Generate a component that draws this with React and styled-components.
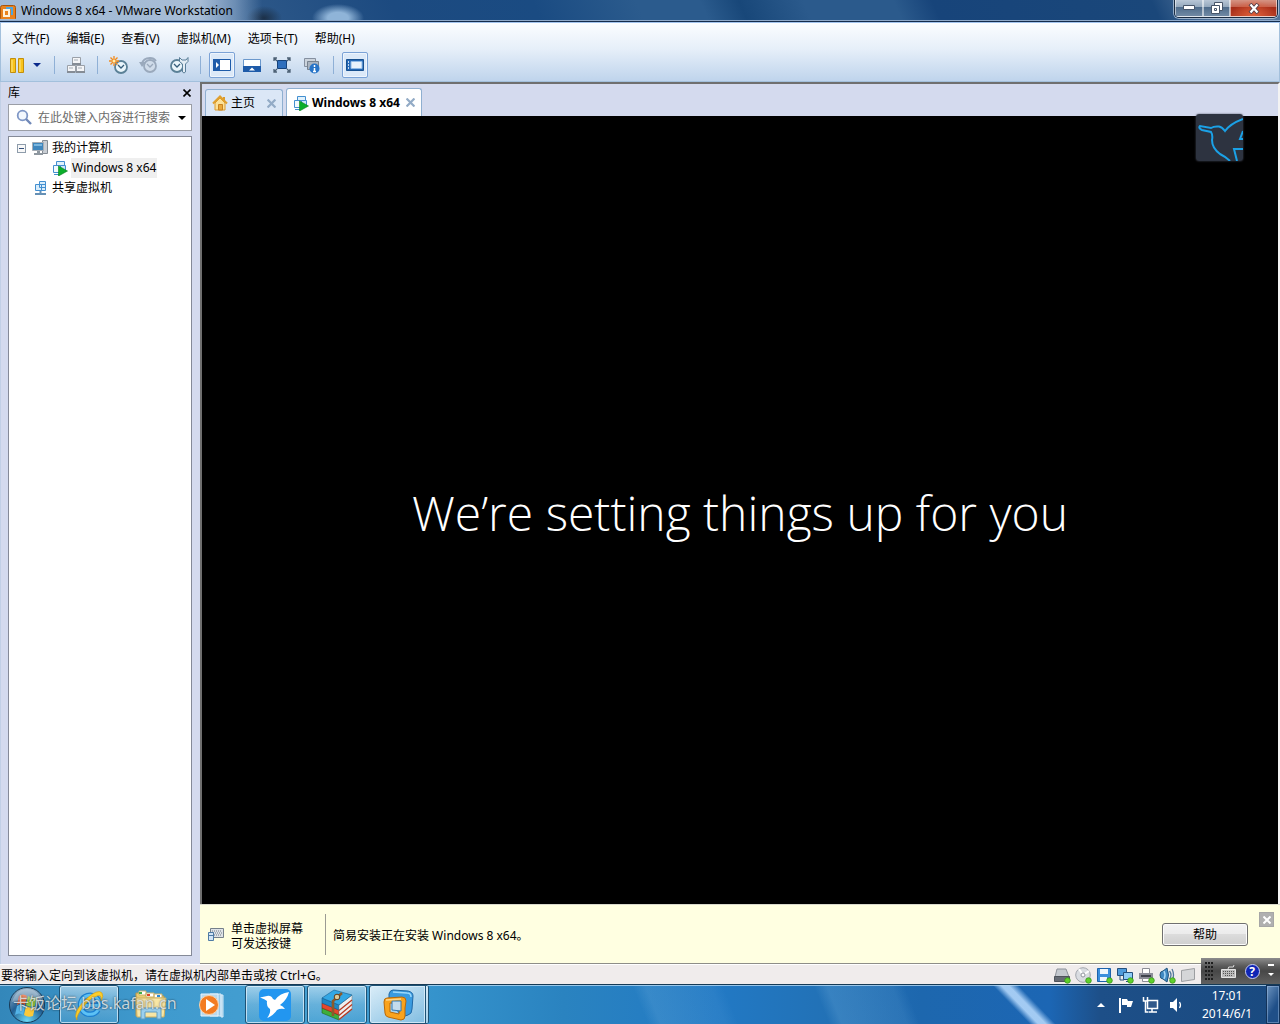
import React from "react";
import styled, { createGlobalStyle, css } from "styled-components";

const ui = '"Noto Sans", "Noto Sans CJK SC", sans-serif';

const GlobalStyle = createGlobalStyle`
  *, *::before, *::after { box-sizing: border-box; }
  body {
    margin: 0;
    overflow: hidden;
    background: #d4daee;
    color: #000;
    font: 12px/16px ${ui};
  }
  button, input { font: inherit; color: inherit; }
  button { border: 0; padding: 0; background: none; }
  svg { display: block; flex: none; }
`;

const Desktop = styled.div`
  height: 100vh;
  display: flex;
  flex-direction: column;
`;

/* ---------- title bar ---------- */

const TitleBar = styled.header`
  flex: none;
  height: 23px;
  display: flex;
  align-items: flex-start;
  padding-right: 2px;
  border-bottom: 1px solid #a3c4ee;
  box-shadow: inset 0 -1px #142c4c, inset 0 -2px #8fa9c9;
  background:
    linear-gradient(90deg, rgba(190, 208, 230, 0.75), rgba(205, 220, 238, 0.75) 200px, rgba(170, 194, 222, 0.5) 235px, transparent 262px),
    radial-gradient(ellipse 26px 14px at 338px 18px, #8fb4d8 40%, transparent),
    radial-gradient(ellipse 18px 12px at 264px 18px, #1c3048, transparent),
    linear-gradient(66deg, #4e79a6, #2c5788 20%, #1c4a80 31%, #1a4b82 42%, #2b5b8d 50%, #2b5b8d 55%, #184779 58%, #2b5a8c 63%, #2b5a8c 70%, #17447a 73%, #1a477a 90%, #6d89ab 96%, #4c7097);
`;

const AppTitle = styled.h1`
  flex: 1;
  display: flex;
  align-items: center;
  gap: 5px;
  height: 22px;
  margin: 0;
  font-size: 12px;
  font-weight: 400;
`;

const WindowButtons = styled.div`
  display: flex;
  height: 18px;
  border: 1px solid #1b2c42;
  border-top: 0;
  border-radius: 0 0 5px 5px;
  overflow: hidden;
  box-shadow: 0 0 0 1px rgba(220, 232, 245, 0.6);
`;

const WindowButton = styled.button`
  width: ${(p) => p.$width}px;
  display: flex;
  justify-content: center;
  align-items: center;
  border: solid rgba(255, 255, 255, 0.55);
  border-width: 0 1px 1px;
  background: ${(p) =>
    p.$danger
      ? "radial-gradient(ellipse at 50% 100%, #e0603a, transparent 70%), linear-gradient(#d69484, #c4604c 45%, #a62c18 46%, #b23a22)"
      : "linear-gradient(#b9c7d6, #93a7bc 45%, #4f6c8b 46%, #7089a4)"};
`;

/* ---------- menus and tools ---------- */

const CommandArea = styled.div`
  flex: none;
  height: 59px;
  border: solid #a3c0dc;
  border-width: 0 1px 1px;
  background: linear-gradient(#fbfdff, #e6eff9 45%, #bfd4ec);
`;

const MenuBar = styled.nav`
  display: flex;
  gap: 17px;
  padding: 8px 11px 5px;
`;

const MenuButton = styled.button`
  line-height: 16px;
  white-space: nowrap;
`;

const ToolBar = styled.div`
  display: flex;
  align-items: center;
  gap: 4px;
  padding-left: 3px;
`;

const ToolButton = styled.button`
  width: ${(p) => (p.$wide ? 42 : 26)}px;
  height: 26px;
  display: flex;
  align-items: center;
  justify-content: center;
  gap: 8px;
  border-radius: 2px;
  ${(p) =>
    p.$pressed &&
    css`
      border: 1px solid #7ba2d6;
      background: #dce9f8;
      box-shadow: inset 0 0 0 1px #eef5fd;
    `}
`;

const Divider = styled.span`
  width: 1px;
  height: 18px;
  margin: 0 4px;
  background: #8fb0d6;
`;

/* ---------- library ---------- */

const Body = styled.div`
  flex: 1;
  min-height: 0;
  display: flex;
`;

const Library = styled.aside`
  flex: none;
  width: 200px;
  display: flex;
  flex-direction: column;
  padding: 0 8px 8px 7px;
  border-left: 1px solid #c2d0e6;
`;

const PanelHeader = styled.div`
  height: 22px;
  display: flex;
  align-items: center;
  justify-content: space-between;
  padding-right: 1px;
`;

const PanelTitle = styled.h2`
  margin: 0;
  font-size: 12px;
  font-weight: 400;
`;

const SearchBox = styled.label`
  height: 27px;
  display: flex;
  align-items: center;
  gap: 5px;
  padding: 0 5px 0 7px;
  border: 1px solid #9b9ea6;
  background: #fff;
`;

const SearchInput = styled.input`
  flex: 1;
  min-width: 0;
  padding: 0;
  border: 0;
  outline: 0;
  background: none;
  &::placeholder { color: #6b6b6b; opacity: 1; }
`;

const Tree = styled.ul`
  flex: 1;
  margin: 5px 0 0;
  padding: 1px 0;
  list-style: none;
  border: 1px solid #858a98;
  background: #fff;
`;

const TreeRow = styled.li`
  height: 20px;
  display: flex;
  align-items: center;
  gap: 3px;
  padding-left: ${(p) => p.$indent}px;
`;

const TreeLabel = styled.span`
  padding: 2px 1px;
  background: ${(p) => (p.$selected ? "#efefef" : "none")};
`;

const Expander = styled.button`
  width: 9px;
  height: 9px;
  display: flex;
  align-items: center;
  justify-content: center;
  margin-right: 3px;
  border: 1px solid #8e9cab;
  background: #f8f8f8;
  &::after { content: ""; width: 5px; height: 1px; background: #34507c; }
`;

/* ---------- machine view ---------- */

const Workspace = styled.main`
  flex: 1;
  min-width: 0;
  display: flex;
  flex-direction: column;
`;

const Viewer = styled.section`
  flex: 1;
  position: relative;
  display: flex;
  flex-direction: column;
  border: solid #6f6f6f;
  border-width: 2px 0 0 2px;
  border-right: 2px solid #f3f3f3;
`;

const TabStrip = styled.div`
  height: 32px;
  display: flex;
  align-items: flex-end;
  gap: 3px;
  padding-left: 3px;
  background: #d4daee;
`;

const Tab = styled.div`
  min-width: ${(p) => (p.$active ? 136 : 78)}px;
  height: ${(p) => (p.$active ? 28 : 27)}px;
  display: flex;
  align-items: center;
  justify-content: space-between;
  padding: 0 6px;
  border: 1px solid #8fafd0;
  border-bottom: 0;
  border-radius: 3px 3px 0 0;
  background: ${(p) => (p.$active ? "#fff" : "#dbe7f6")};
  font-weight: ${(p) => (p.$active ? 700 : 400)};
`;

const TabName = styled.button`
  display: flex;
  align-items: center;
  gap: 3px;
  font-weight: inherit;
  white-space: nowrap;
`;

const Screen = styled.div`
  flex: 1;
  display: flex;
  align-items: center;
  justify-content: center;
  background: #000;
  color: #fff;
`;

const SetupMessage = styled.p`
  margin: 0;
  padding-top: 6px;
  font: 300 48px/64px "Open Sans", "Noto Sans", sans-serif;
  white-space: nowrap;
`;

const BirdBadge = styled.div`
  position: absolute;
  top: 30px;
  right: 35px;
  border-radius: 3px;
  overflow: hidden;
  box-shadow: 0 0 2px #4b5160;
`;

const HintBar = styled.section`
  flex: none;
  height: 60px;
  display: flex;
  align-items: center;
  gap: 7px;
  padding: 0 6px 0 8px;
  border: solid #8e8e88;
  border-width: 1px 0;
  border-top-color: #d9d9cc;
  background: #ffffe1;
`;

const HintTip = styled.p`
  width: 87px;
  margin: 0;
  padding-top: 3px;
  line-height: 15px;
  white-space: nowrap;
`;

const HintRule = styled.span`
  width: 1px;
  height: 41px;
  background: #9b9b93;
`;

const HintText = styled.p`
  flex: 1;
  margin: 0;
  padding-top: 3px;
`;

const HelpButton = styled.button`
  width: 86px;
  height: 23px;
  margin-right: 4px;
  padding-top: 2px;
  border: 1px solid #707070;
  border-radius: 3px;
  background: linear-gradient(#f3f3f3, #ebebeb 49%, #dcdcdc 50%, #cfcfcf);
  box-shadow: inset 0 0 0 1px #fbfbfb;
`;

const DismissButton = styled.button`
  width: 15px;
  height: 15px;
  align-self: flex-start;
  display: flex;
  align-items: center;
  justify-content: center;
  margin-top: 7px;
  border: 1px solid #a6a6a6;
  background: #b0b0b0;
`;

/* ---------- status bar ---------- */

const StatusBar = styled.footer`
  flex: none;
  position: relative;
  height: 20px;
  display: flex;
  align-items: center;
  justify-content: space-between;
  padding: 2px 83px 0 1px;
  border-top: 1px solid #fff;
  background: #f0ecec;
`;

const Devices = styled.div`
  display: flex;
  gap: 4px;
`;

const Device = styled.button`
  width: 17px;
  height: 17px;
`;

const LanguageBar = styled.div`
  position: absolute;
  right: 0;
  bottom: 0;
  width: 79px;
  height: 26px;
  display: flex;
  align-items: center;
  justify-content: space-between;
  padding: 0 6px 0 4px;
  background: linear-gradient(#8d8d8d, #5c5c5c 30%, #474747 50%, #606060);
`;

/* ---------- taskbar ---------- */

const TaskBar = styled.div`
  flex: none;
  position: relative;
  height: 40px;
  display: flex;
  border-top: 1px solid #163a55;
  box-shadow: inset 0 1px rgba(190, 222, 245, 0.75);
  background:
    linear-gradient(46deg, transparent 83.2%, rgba(170, 208, 246, 0.95) 83.9%, rgba(170, 208, 246, 0.95) 84.5%, transparent 85.3%) 0 0 / 1200px 100% no-repeat,
    linear-gradient(68deg, transparent 50%, rgba(120, 180, 225, 0.22) 51%, rgba(120, 180, 225, 0.1) 56%, transparent 57%, transparent 64%, rgba(120, 180, 225, 0.25) 65%, rgba(120, 180, 225, 0.15) 70%, transparent 71%),
    linear-gradient(90deg, #3387ba, #3f9ace 12%, #45a0d2 25%, #3593cc 34%, #2a83c0 44%, #2279c4 56%, #2270b4 66%, #1d67ae 72%, #1c66b4 82%, #1d4f88 86%, #1a4a80);
`;

const StartButton = styled.button`
  width: 55px;
  padding-left: 8px;
`;

const Tasks = styled.div`
  flex: 1;
  display: flex;
  gap: 2px;
  padding-left: 4px;
`;

const TaskButton = styled.button`
  width: 60px;
  display: flex;
  align-items: center;
  justify-content: center;
  ${(p) =>
    p.$open &&
    css`
      border: 1px solid #1d5275;
      border-radius: 3px;
      box-shadow: inset 0 0 0 1px rgba(225, 242, 252, 0.75);
      background: linear-gradient(rgba(235, 247, 255, 0.55), rgba(200, 228, 246, 0.25) 50%, rgba(120, 190, 230, 0.15));
    `}
  ${(p) =>
    p.$current &&
    css`
      background: linear-gradient(150deg, rgba(245, 251, 255, 0.85), rgba(190, 222, 242, 0.55));
      border-right: 4px double #1d5275;
    `}
`;

const Tray = styled.div`
  display: flex;
  align-items: center;
  color: #fff;
`;

const TrayButton = styled.button`
  width: 25px;
  display: flex;
  justify-content: center;
`;

const Clock = styled.time`
  width: 78px;
  line-height: 18px;
  text-align: center;
`;

const ShowDesktop = styled.button`
  width: 14px;
  align-self: stretch;
  border: 1px solid #123259;
  box-shadow: inset 0 0 0 1px rgba(180, 208, 240, 0.4);
  background: linear-gradient(120deg, #6b92be, #1f4f88 60%);
`;

const Watermark = styled.span`
  position: absolute;
  left: 13px;
  top: 8px;
  color: rgba(240, 246, 250, 0.8);
  font-size: 16px;
  line-height: 20px;
  text-shadow: 0 0 2px rgba(0, 0, 0, 0.7);
  white-space: nowrap;
  pointer-events: none;
`;

/* ---------- drawings ---------- */

const Svg = ({ w = 16, h = w, box, children }) => (
  <svg width={w} height={h} viewBox={box || `0 0 ${w} ${h}`} fill="none" aria-hidden="true">
    {children}
  </svg>
);

const Cross = ({ size = 8, color = "#000", stroke = 2 }) => (
  <Svg w={size} box="0 0 8 8">
    <path d="M.5.5l7 7M7.5.5l-7 7" stroke={color} strokeWidth={stroke} />
  </Svg>
);

const Caret = ({ color = "#000", up }) => (
  <Svg w={8} h={4}>
    <path d={up ? "M0 4h8L4 0z" : "M0 0h8L4 4z"} fill={color} />
  </Svg>
);

const VMLogo = ({ size }) => (
  <Svg w={size} box="0 0 32 32">
    <path d="M11 1l15 1q5 1 5 5l-1 13q0 5-4 6l-6 2L7 10V5q1-4 4-4z" fill="#3a9be0" stroke="#1f68a6" />
    <path d="M11 3l14 1q4 0 4 4" stroke="#9bd8fb" strokeWidth="1.500" />
    <path fillRule="evenodd" d="M5 9l15-1q4 0 4 4l-1 7v8q0 4-4 4l-13-3q-3-1-3-4L2 13q0-4 3-4zm3 5v9l9 2 1-11z" fill="#f9a31d" stroke="#b96908" />
    <path d="M10 12h9v10l-9-1z" fill="#c4dcec" stroke="#2f79b4" />
    <path d="M4 11l15-1" stroke="#ffd68a" strokeWidth="1.300" />
  </Svg>
);

const AppIcon = () => (
  <Svg w={16}>
    <rect x=".5" y="2.500" width="15" height="15" rx="2" fill="#e9821e" stroke="#a9540a" />
    <path d="M6 4h7v8h-2V6H6z" fill="#4aa6e2" />
    <path d="M3 6h7v8H3zM5 8v4h3V8z" fill="#fff2dc" fillRule="evenodd" />
  </Svg>
);

const Machine = () => (
  <Svg w={16}>
    <path d="M4.500 1.500h8v8h-8z" fill="#e0f1fc" stroke="#438fd0" />
    <path d="M1.500 5.500h7v7h-7z" fill="#f2f9fe" stroke="#438fd0" />
    <path d="M8.500 5.500h5v6h-5z" fill="#cae6fa" stroke="#438fd0" />
    <path d="M2 14.500h5" stroke="#438fd0" />
    <path d="M6.500 6l9 5-9 5z" fill="#0cae2b" stroke="#08801c" strokeWidth=".6" />
  </Svg>
);

const HomeIcon = () => (
  <Svg w={16}>
    <path d="M3 8v7h10V8L8 3z" fill="#fbe19a" stroke="#dc9b2c" />
    <path d="M12 2v4" stroke="#dc9b2c" strokeWidth="2" />
    <path d="M1 8.500l7-7 7 7" stroke="#dfa030" strokeWidth="2" />
    <path d="M6.500 9.500h4V15h-4z" fill="#eaa838" stroke="#c98420" />
  </Svg>
);

const PauseIcon = () => (
  <Svg w={15}>
    <path d="M.5.5h5v14h-5zM8.500.5h5v14h-5z" fill="#f8c31c" stroke="#c38f0a" />
    <path d="M2 2v12M10 2v12" stroke="#fde68a" />
  </Svg>
);

const KeysIcon = () => (
  <Svg w={20} h={18}>
    <path d="M6.500 1.500h8v6h-8zM1.500 9.500h8v6h-8zM10.500 9.500h8v6h-8z" fill="#f4f5f7" stroke="#9aa0a8" />
    <path d="M6 8h9M1 16h8.500M10 16h9" stroke="#858c95" strokeWidth="2" />
    <path d="M8 4h4M3 12h4M12 12h4" stroke="#a5adb6" />
  </Svg>
);

const Dial = ({ faded, x = 10, y = 11 }) => (
  <>
    <circle cx={x} cy={y} r="6" fill={faded ? "#d0dcea" : "#e9f5fb"} stroke={faded ? "#9aa9bc" : "#5b8197"} strokeWidth="1.800" />
    <path d={`M${x - 3} ${y - 2}l3 3 3-3`} stroke={faded ? "#9aa9bc" : "#355d7a"} strokeWidth="1.300" />
  </>
);

const SnapshotIcon = () => (
  <Svg w={20} h={18}>
    <Dial x={12} y={11} />
    <path d="M5 0v10M0 5h10M1.500 1.500l7 7M8.500 1.500l-7 7" stroke="#f18a1d" strokeWidth="1.300" />
    <circle cx="5" cy="5" r="1.500" fill="#fff0b0" />
  </Svg>
);

const RevertIcon = () => (
  <Svg w={20} h={18}>
    <Dial faded x={11} y={10} />
    <path d="M3 8q1-6 8-6 4 0 6 3" stroke="#9aa9bc" strokeWidth="1.800" />
    <path d="M0 6h7l-4 5z" fill="#9aa9bc" />
  </Svg>
);

const ManageIcon = () => (
  <Svg w={20} h={18}>
    <Dial x={8} y={10} />
    <path d="M10.500 1.500v4l3 2.500v8q1.500 2 3 0V8l2.500-2.500v-4l-2 2.500h-4z" fill="#e3edf4" stroke="#5b7f99" />
  </Svg>
);

const LibraryPaneIcon = () => (
  <Svg w={18} h={12}>
    <path d="M.5.5h17v11H.5z" fill="#fff" stroke="#1e5ba9" />
    <path d="M0 0h7v12H0z" fill="#1e5ba9" />
    <path d="M3 3l3 3-3 3z" fill="#fff" />
  </Svg>
);

const ThumbPaneIcon = () => (
  <Svg w={18} h={13}>
    <path d="M.5.500h17v11H.5z" fill="#fff" stroke="#6b98cc" />
    <path d="M0 7h18v6H0z" fill="#1e5ba9" />
    <path d="M6 11.500l3-3 3 3z" fill="#fff" />
  </Svg>
);

const FullScreenIcon = () => (
  <Svg w={18} h={16}>
    <path d="M4.500 3.500h9v8h-9z" fill="#2f6fbd" stroke="#16437c" />
    <path d="M1 4V1h3M14 1h3v3M17 12v3h-3M4 15H1v-3M1 1l3 3M17 1l-3 3M17 15l-3-3M1 15l3-3" stroke="#4c6074" strokeWidth="1.300" />
  </Svg>
);

const UnityIcon = () => (
  <Svg w={18} h={17}>
    <path d="M1.500 1.500h11v8h-11z" fill="#cbd3dc" stroke="#8590a0" />
    <path d="M4.500 4.500h11v8h-11z" fill="#aab4c0" stroke="#77828f" />
    <circle cx="11.500" cy="11.500" r="5" fill="#2874c7" />
    <path d="M11.500 8v2M11.500 11v4M10 14.500h3" stroke="#fff" strokeWidth="1.500" />
  </Svg>
);

const ConsoleIcon = () => (
  <Svg w={18} h={12}>
    <path d="M.5.500h17v11H.5z" fill="#2367b5" stroke="#18508f" />
    <path d="M5 2.500h11v7H5z" fill="#e8f2fc" stroke="#8fb9e6" />
    <path d="M2 3h1M2 6h1M2 9h1" stroke="#fff" strokeWidth="1.500" />
  </Svg>
);

const SearchIcon = () => (
  <Svg w={17}>
    <circle cx="6.500" cy="6.500" r="4.800" fill="#f3f8fe" stroke="#7f97c6" strokeWidth="1.800" />
    <path d="M10 10l5 5" stroke="#7088b8" strokeWidth="2.400" />
  </Svg>
);

const ComputerIcon = () => (
  <Svg w={16}>
    <path d="M10.500.500h5v13h-5z" fill="#c9ced4" stroke="#858c94" />
    <path d="M.5 2.500h11v8H.5z" fill="#3f86bd" stroke="#a6adb5" />
    <path d="M2 4h8v2H2z" fill="#7bb6de" />
    <path d="M5 11h3v2H5zM2 13h9v2H2z" fill="#8e979f" />
  </Svg>
);

const SharedIcon = () => (
  <Svg w={14}>
    <path d="M5.500.500h6v6h-6zM1.500 3.500h6v6h-6zM7.500 3.500h4v6h-4z" fill="#d9edfb" stroke="#438fd0" />
    <path d="M6.500 10v3M1 13h11" stroke="#6590b5" strokeWidth="2" />
  </Svg>
);

const KeyboardHint = () => (
  <Svg w={16} h={13}>
    <path d="M2.500.500h13v9h-13z" fill="#dfe3e7" stroke="#75808a" />
    <path d="M4 3h10M5 5h9M4 7h10" stroke="#707a84" strokeDasharray="1 1" />
    <path d="M.5 4.500h5v8h-5z" fill="#d3e6f6" stroke="#4f7ba5" />
    <path d="M1 7.500h4" stroke="#4f7ba5" />
  </Svg>
);

const BirdOutline = () => (
  <svg width="47" height="47" viewBox="0 0 47 47" fill="none" aria-hidden="true">
    <path d="M0 0h47v47H0z" fill="#2d3340" />
    <path d="M47 5Q34 10 29 17q-3-4-6-4.500-5-.5-8 1.500L4 12q-2 2 2 4l9 2q2 3 1 8 0 8 8 14 6 3 10 7" stroke="#1ba1e6" strokeWidth="2" />
    <path d="M47 17l-3 8h3M41 47l-3-12h9" stroke="#1ba1e6" strokeWidth="2" />
  </svg>
);

const deviceShapes = {
  硬盘: <><path d="M3 2h9l3 8H1z" fill="#c5c9cf" stroke="#8d929a" /><path d="M.5 9.500h15v5H.5z" fill="#666b74" stroke="#4e535b" /></>,
  光驱: <><circle cx="8" cy="8" r="7.300" fill="#d9dce1" stroke="#a2a6ad" /><path d="M8 8L4 2M8 8l6-4" stroke="#fff" strokeWidth="2" /><circle cx="8" cy="8" r="2" fill="#fff" stroke="#8f949c" /></>,
  软盘: <><path d="M1.500 1.500h13v13h-13z" fill="#3b8fdd" stroke="#1d62ab" /><path d="M4 2h8v5H4zM4 10h7v4H4z" fill="#eef6fd" /></>,
  网络: <><path d="M.5 1.500h9v7h-9z" fill="#4f9bdc" stroke="#24507e" /><path d="M6.500 5.500h9v7h-9z" fill="#8fcbf6" stroke="#24507e" /><path d="M3 9v4h4M9 14.500h5" stroke="#24507e" /></>,
  打印机: <><path d="M4.500 1.500h7v5h-7z" fill="#fff" stroke="#8d8d96" /><path d="M1 6h14v6H1z" fill="#8c8d98" /><path d="M3 8h10v2H3z" fill="#40424d" /><path d="M4.500 11.500h7v3h-7z" fill="#fff" stroke="#8d8d96" /></>,
  声卡: <><path d="M1 8q0-4 3-4l4-3q3 7 0 14l-4-3Q1 12 1 8z" fill="#3f88c2" stroke="#24567e" /><path d="M5 4q2 4 0 8" stroke="#a9d6f4" strokeWidth="1.500" /><path d="M10.500 4q3 4 0 8M13 2q3 6 0 12" stroke="#50779a" strokeWidth="1.300" /></>,
  消息: <path d="M1.500 3.500l13-2v11l-13 2z" fill="#d5d6d8" stroke="#9c9ea1" />,
};

const DeviceIcon = ({ name }) => (
  <Svg w={17} box="0 0 17 17">
    {deviceShapes[name]}
    {name !== "消息" && <circle cx="13.500" cy="13.500" r="2.800" fill="#5fd02c" stroke="#2d8b14" strokeWidth=".7" />}
  </Svg>
);

const StartOrb = () => (
  <Svg w={38} box="0 0 38 38">
    <defs>
      <radialGradient id="orb" cx=".5" cy=".95" r=".9">
        <stop offset="0" stopColor="#6ad8f6" />
        <stop offset=".55" stopColor="#215f94" />
        <stop offset="1" stopColor="#8aa9c2" />
      </radialGradient>
    </defs>
    <circle cx="19" cy="19" r="17.500" fill="url(#orb)" stroke="#173a57" />
    <path d="M11 10q4-3 8 0l-2 9q-4-3-8 0z" fill="#ee6532" />
    <path d="M20 10q4 3 9 1l-2 9q-5 2-9-1z" fill="#8cc63e" />
    <path d="M9 20q4-3 8 0l-2 9q-4-3-8 0z" fill="#54b4e8" />
    <path d="M18 20q4 3 9 1l-2 9q-5 2-9-1z" fill="#fcc93a" />
    <path d="M4 16Q8 3 19 3t15 13q-14-5-30 0z" fill="#fff" opacity=".28" />
  </Svg>
);

const IEIcon = () => (
  <Svg w={32}>
    <path d="M25 21A9.500 9.500 0 1 1 26.500 16.500H9" stroke="#1c7fd0" strokeWidth="5.500" />
    <path d="M25 21A9.500 9.500 0 1 1 26.500 16.500H9" stroke="#5cc1f5" strokeWidth="3" />
    <path d="M4 31Q-1 24 12 11 25-1 29 4q2 3-1 8 1-7-4-5-7 2-14 11T4 31z" fill="#fbcd2c" stroke="#d39b0c" strokeWidth=".6" />
  </Svg>
);

const FolderIcon = () => (
  <Svg w={34} h={32}>
    <path d="M2 4h8l2 3h18v20H2z" fill="#e9cd75" stroke="#b9974a" />
    <path d="M5 2h7v4H5zM12 4h8v4h-8zM20 5h8v4h-8z" fill="#fff" stroke="#ccb36a" />
    <path d="M5 3h3v2H5z" fill="#3fae49" /><path d="M13 5h3v2h-3z" fill="#e0442c" /><path d="M23 6h3v2h-3z" fill="#2f8bd6" />
    <path d="M2 9h30l-2 19H3z" fill="#f8e6a5" stroke="#cdb062" />
    <path d="M7 30V19h20v11h-4v-7H11v7z" fill="#9bd0ee" stroke="#5f9dc4" />
  </Svg>
);

const MediaIcon = () => (
  <Svg w={30} h={28}>
    <path d="M12 3h11v22H12zM23 4h2v22h-2z" fill="#9cc9e6" stroke="#d7ebf8" />
    <path d="M3 3h17v22H3z" fill="#b8d9ee" stroke="#e6f3fb" />
    <circle cx="11" cy="14" r="9.500" fill="#f37c22" stroke="#fbd2a8" />
    <path d="M8 8l9 6-9 6z" fill="#fff" />
  </Svg>
);

const BirdIcon = () => (
  <Svg w={32}>
    <rect width="32" height="32" rx="5" fill="#2296f0" />
    <path d="M1 8.500l7-1.500q4-1 6 3l2 1q5-7 14-8-2 8-9 13 3 1 5 4-5-1-8 1-3 5-10 8 4-5 3-9-4-3-3-8-2-2-7-3.500z" fill="#fff" />
  </Svg>
);

const BooksIcon = () => (
  <Svg w={34} h={32}>
    <path d="M2 19l17 7v5L2 24z" fill="#3fae3a" stroke="#1c661c" strokeWidth=".6" />
    <path d="M2 14l17 7v5L2 19z" fill="#e5482c" stroke="#8e2412" strokeWidth=".6" />
    <path d="M2 9l17 7v5L2 14z" fill="#1f86c4" stroke="#145c8e" strokeWidth=".6" />
    <path d="M19 16L32 6v14L19 31z" fill="#eceff0" stroke="#7f8a90" strokeWidth=".6" />
    <path d="M19 21.500L32 11M19 26.500L32 15.500M19 30.500L32 20" stroke="#b83a22" strokeWidth="1.300" />
    <path d="M2 9L14 1l18 5-13 10z" fill="#33a7e4" stroke="#145c8e" strokeWidth=".6" />
    <path d="M22 4l-9 8v15" stroke="#8c5a2b" strokeWidth="2.600" />
    <circle cx="17" cy="8" r="2.800" fill="#dcc998" stroke="#5e3a18" />
  </Svg>
);

const FlagIcon = () => (
  <Svg w={16}>
    <path d="M2 1v15" stroke="#fff" strokeWidth="2" />
    <path d="M4 2h5l1 2h5l-2 6H9V8H4z" fill="#fff" />
  </Svg>
);

const NetworkIcon = () => (
  <Svg w={17} h={16}>
    <path d="M5.500 3.500h10v8h-10z" fill="#31598a" stroke="#fff" strokeWidth="1.500" />
    <path d="M7 15h8M10 12v3M1.500 0v4h4V0M3.500 4v11h3" stroke="#fff" strokeWidth="1.500" />
  </Svg>
);

const SpeakerIcon = () => (
  <Svg w={14} h={16}>
    <path d="M1 5h3l4-4v14l-4-4H1z" fill="#fff" />
    <path d="M10.500 5q2 3 0 6" stroke="#fff" strokeWidth="1.300" />
  </Svg>
);

const Grip = () => (
  <Svg w={8} h={18}>
    <path d="M1 0v18M4 0v18M7 0v18" stroke="#1d1d1d" strokeWidth="2" strokeDasharray="2 2" />
  </Svg>
);

const LangKeyboard = () => (
  <Svg w={15} h={13}>
    <path d="M.5 4.500h14v8H.5z" fill="#bbb" stroke="#e4e4e4" />
    <path d="M2 6.500h11M2 8.500h11M4 10.500h7" stroke="#555" strokeDasharray="1 1" />
    <path d="M7 4q0-3 3-2t3-2" stroke="#ddd" />
  </Svg>
);

const Question = styled.button`
  width: 15px;
  height: 15px;
  border: 1px solid #c9cff5;
  border-radius: 50%;
  background: #1026b5;
  color: #fff;
  font-weight: 700;
  line-height: 13px;
`;

const LangOptions = () => (
  <Svg w={6} h={14}>
    <path d="M0 1h6" stroke="#fff" strokeWidth="2" />
    <path d="M0 9h6l-3 3z" fill="#fff" />
  </Svg>
);

/* ---------- page ---------- */

const menus = ["文件(F)", "编辑(E)", "查看(V)", "虚拟机(M)", "选项卡(T)", "帮助(H)"];

const tools = [
  { label: "暂停", icon: <><PauseIcon /><Caret color="#0a2a8c" /></>, wide: true },
  null,
  { label: "发送按键", icon: <KeysIcon /> },
  null,
  { label: "拍摄快照", icon: <SnapshotIcon /> },
  { label: "恢复快照", icon: <RevertIcon /> },
  { label: "管理快照", icon: <ManageIcon /> },
  null,
  { label: "显示库", icon: <LibraryPaneIcon />, pressed: true },
  { label: "显示缩略图", icon: <ThumbPaneIcon /> },
  { label: "全屏", icon: <FullScreenIcon /> },
  { label: "Unity", icon: <UnityIcon /> },
  null,
  { label: "控制台视图", icon: <ConsoleIcon />, pressed: true },
];

export default function App() {
  return (
    <Desktop>
      <GlobalStyle />
      <TitleBar>
        <AppTitle><AppIcon />Windows 8 x64 - VMware Workstation</AppTitle>
        <WindowButtons>
          <WindowButton $width={28} aria-label="最小化">
            <Svg w={12} h={6}><path d="M.5.500h11v4H.5z" fill="#fff" stroke="#475569" /></Svg>
          </WindowButton>
          <WindowButton $width={27} aria-label="还原">
            <Svg w={12}>
              <path d="M3.500.500h8v8h-8z" fill="#fff" stroke="#475569" />
              <path d="M.5 3.500h8v8h-8z" fill="#fff" stroke="#475569" />
              <path d="M3.500 6.500h2v2h-2z" fill="#fff" stroke="#475569" />
            </Svg>
          </WindowButton>
          <WindowButton $width={47} $danger aria-label="关闭">
            <Svg w={12} h={11}>
              <path d="M2 1l8 9M10 1l-8 9" stroke="#57404a" strokeWidth="4" />
              <path d="M2.500 1.500l7 8M9.500 1.500l-7 8" stroke="#fff" strokeWidth="2.200" />
            </Svg>
          </WindowButton>
        </WindowButtons>
      </TitleBar>

      <CommandArea>
        <MenuBar>
          {menus.map((m) => <MenuButton key={m}>{m}</MenuButton>)}
        </MenuBar>
        <ToolBar>
          {tools.map((t, i) =>
            t ? (
              <ToolButton key={t.label} aria-label={t.label} $wide={t.wide} $pressed={t.pressed}>{t.icon}</ToolButton>
            ) : (
              <Divider key={i} />
            )
          )}
        </ToolBar>
      </CommandArea>

      <Body>
        <Library>
          <PanelHeader>
            <PanelTitle>库</PanelTitle>
            <button aria-label="关闭库"><Cross stroke={1.6} /></button>
          </PanelHeader>
          <SearchBox>
            <SearchIcon />
            <SearchInput aria-label="搜索" placeholder="在此处键入内容进行搜索" />
            <Caret />
          </SearchBox>
          <Tree>
            <TreeRow $indent={8}>
              <Expander aria-label="折叠" />
              <ComputerIcon />
              <TreeLabel>我的计算机</TreeLabel>
            </TreeRow>
            <TreeRow $indent={43}>
              <Machine />
              <TreeLabel $selected>Windows 8 x64</TreeLabel>
            </TreeRow>
            <TreeRow $indent={25}>
              <SharedIcon />
              <TreeLabel>共享虚拟机</TreeLabel>
            </TreeRow>
          </Tree>
        </Library>

        <Workspace>
          <Viewer>
            <TabStrip>
              <Tab>
                <TabName><HomeIcon />主页</TabName>
                <button aria-label="关闭主页"><Cross size={9} color="#93abc6" /></button>
              </Tab>
              <Tab $active>
                <TabName><Machine />Windows 8 x64</TabName>
                <button aria-label="关闭 Windows 8 x64"><Cross size={9} color="#93abc6" /></button>
              </Tab>
            </TabStrip>
            <Screen><SetupMessage>We’re setting things up for you</SetupMessage></Screen>
            <BirdBadge><BirdOutline /></BirdBadge>
          </Viewer>
          <HintBar>
            <KeyboardHint />
            <HintTip>单击虚拟屏幕<br />可发送按键</HintTip>
            <HintRule />
            <HintText>简易安装正在安装 Windows 8 x64。</HintText>
            <HelpButton>帮助</HelpButton>
            <DismissButton aria-label="关闭提示"><Cross color="#fff" /></DismissButton>
          </HintBar>
        </Workspace>
      </Body>

      <StatusBar>
        <span>要将输入定向到该虚拟机，请在虚拟机内部单击或按 Ctrl+G。</span>
        <Devices>
          {Object.keys(deviceShapes).map((d) => (
            <Device key={d} aria-label={d}><DeviceIcon name={d} /></Device>
          ))}
        </Devices>
        <LanguageBar>
          <Grip />
          <LangKeyboard />
          <Question aria-label="帮助">?</Question>
          <LangOptions />
        </LanguageBar>
      </StatusBar>

      <TaskBar>
        <StartButton aria-label="开始"><StartOrb /></StartButton>
        <Tasks>
          <TaskButton $open aria-label="Internet Explorer"><IEIcon /></TaskButton>
          <TaskButton aria-label="资源管理器"><FolderIcon /></TaskButton>
          <TaskButton aria-label="媒体播放器"><MediaIcon /></TaskButton>
          <TaskButton $open aria-label="迅雷"><BirdIcon /></TaskButton>
          <TaskButton $open aria-label="WinRAR"><BooksIcon /></TaskButton>
          <TaskButton $open $current aria-label="VMware Workstation"><VMLogo size={32} /></TaskButton>
        </Tasks>
        <Tray>
          <TrayButton aria-label="显示隐藏的图标"><Caret up color="#fff" /></TrayButton>
          <TrayButton aria-label="操作中心"><FlagIcon /></TrayButton>
          <TrayButton aria-label="网络"><NetworkIcon /></TrayButton>
          <TrayButton aria-label="音量"><SpeakerIcon /></TrayButton>
          <Clock>17:01<br />2014/6/1</Clock>
          <ShowDesktop aria-label="显示桌面" />
        </Tray>
        <Watermark>卡饭论坛 bbs.kafan.cn</Watermark>
      </TaskBar>
    </Desktop>
  );
}
